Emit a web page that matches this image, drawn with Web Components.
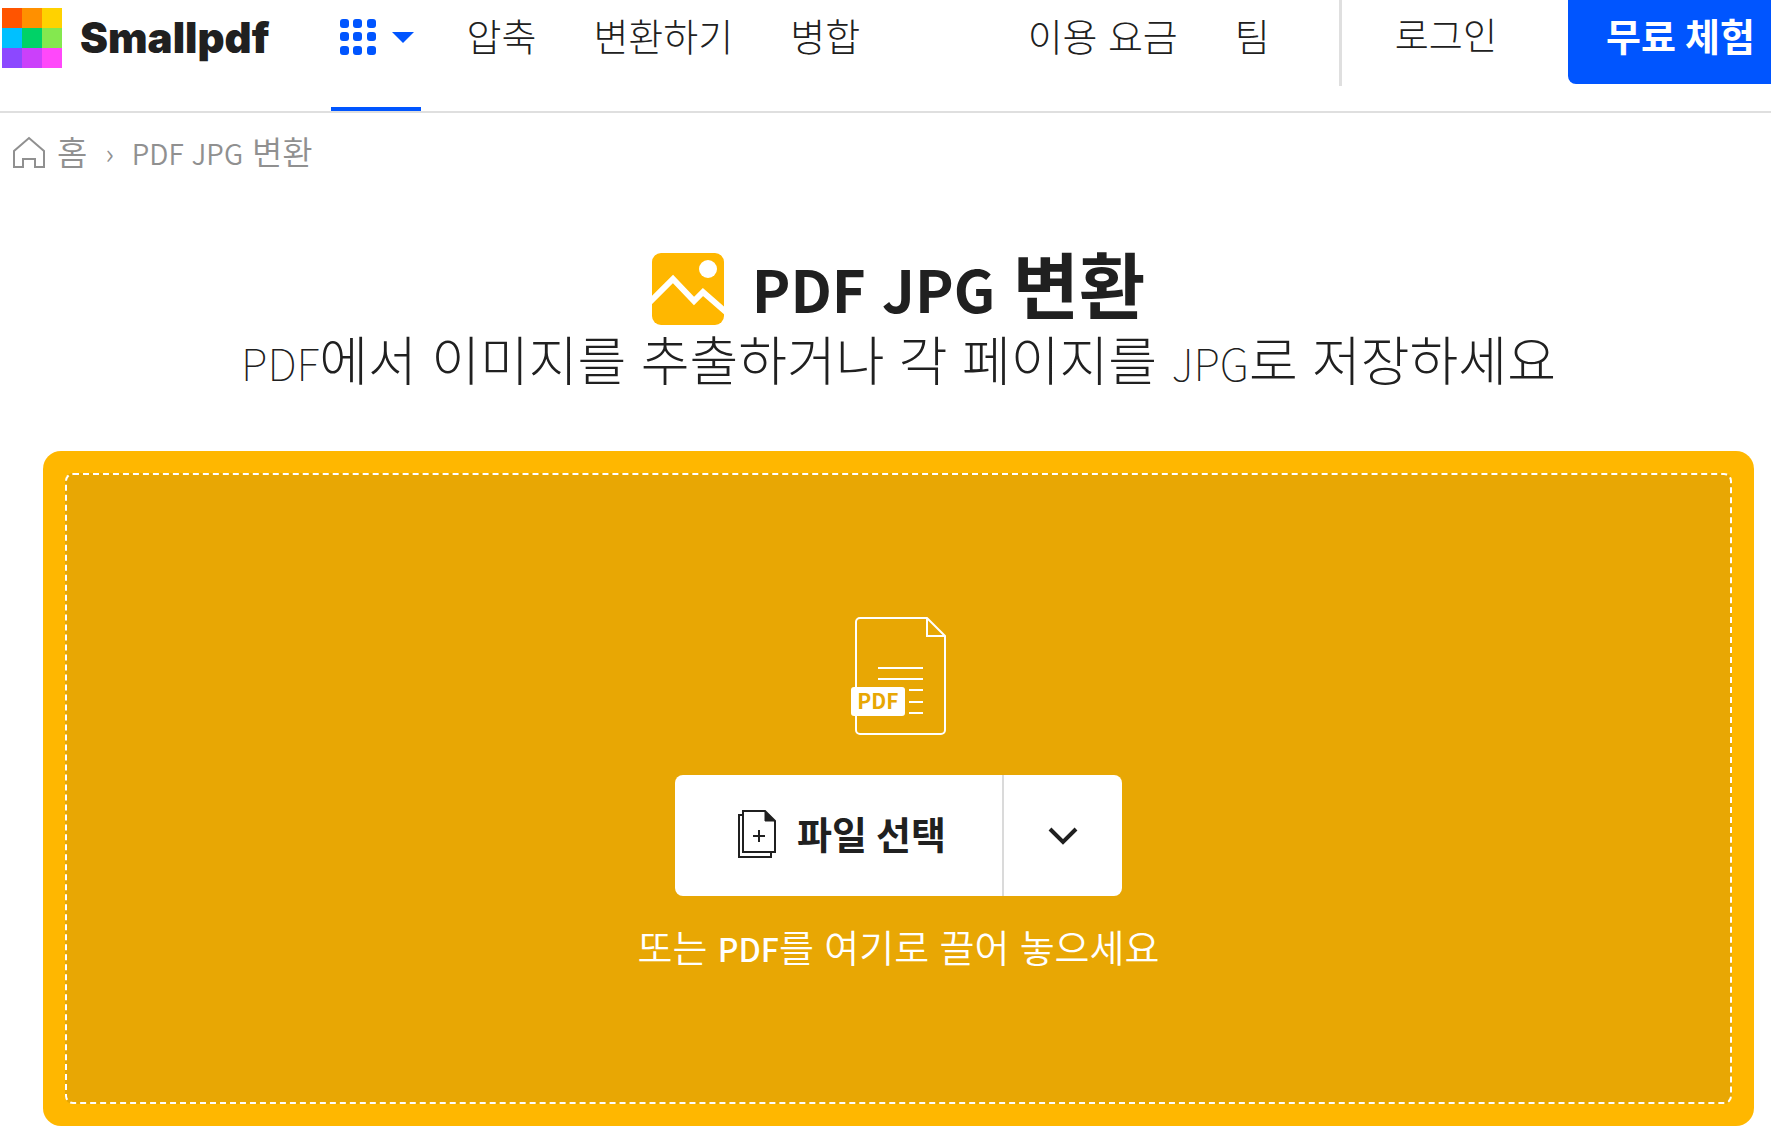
<!DOCTYPE html>
<html lang="ko">
<head>
<meta charset="utf-8">
<meta name="viewport" content="width=device-width, initial-scale=1">
<title>PDF JPG 변환</title>
<style>
  body {
    margin: 0;
    background: #fff;
    color: #202020;
    font-family: Lato, "Noto Sans CJK KR", sans-serif;
  }
</style>
</head>
<body>
<converter-page></converter-page>

<script>
class BaseElement extends HTMLElement {
  constructor() {
    super()
    const template = document.createElement('template')
    template.innerHTML = this.render()
    this.attachShadow({mode: 'open'})
    this.shadowRoot.appendChild(template.content.cloneNode(true))
  }
}


// Latin words are set smaller than the Hangul around them
const latinStyle = `
  .latin {
    font-family: "Noto Sans CJK KR", sans-serif;
    line-height: 1;
  }
`


class SiteLogo extends BaseElement {
  render() {
    const colors = [
      '#ff5400', '#ff9000', '#ffd200',
      '#00c0ff', '#00d267', '#84e84f',
      '#8c48ff', '#cb40fa', '#ff48fa',
    ]
    return `
      <style>
        :host { display: block; }
        a {
          display: flex;
          align-items: center;
          gap: 18px;
          color: #202020;
          font: 900 42px/60px Inter, sans-serif;
          text-decoration: none;
        }
        .tiles {
          display: grid;
          grid-template-columns: repeat(3, 20px);
          grid-auto-rows: 20px;
          outline: 1px solid #fff6;
        }
      </style>
      <a href="#">
        <span class="tiles">
          ${colors.map((c) => `<i style="background: ${c}"></i>`).join('')}
        </span>
        Smallpdf
      </a>
    `
  }
}


class NavLink extends BaseElement {
  render() {
    return `
      <style>
        :host {
          display: block;
          font-size: 38px;
          font-weight: 300;
          line-height: 72px;
        }
        a {
          color: inherit;
          text-decoration: none;
          white-space: nowrap;
        }
      </style>
      <a href="#"><slot></slot></a>
    `
  }
}


class ToolsMenu extends BaseElement {
  render() {
    const dots = []
    for (const y of [0, 13, 27]) {
      for (const x of [0, 13, 27]) {
        dots.push(`<rect x="${x}" y="${y}" width="9" height="9" rx="3" />`)
      }
    }
    return `
      <style>
        :host { display: flex; }
        button {
          display: flex;
          align-items: center;
          gap: 16px;
          box-sizing: border-box;
          height: 111px;
          padding: 0 7px 33px 9px;
          border: 0;
          border-bottom: 4px solid #0055ff;
          background: none;
        }
        svg { display: block; fill: #0055ff; }
      </style>
      <button type="button" aria-label="모든 도구">
        <svg width="36" height="36" viewBox="0 0 36 36">${dots.join('')}</svg>
        <svg width="22" height="11" viewBox="0 0 22 11"><path d="M0 0h22L11 11z" /></svg>
      </button>
    `
  }
}


class SiteHeader extends BaseElement {
  render() {
    return `
      <style>
        :host {
          display: flex;
          align-items: flex-start;
          height: 111px;
          border-bottom: 2px solid #dfdfdf;
        }
        site-logo { margin: 8px 62px 0 2px; }
        nav { display: flex; gap: 57px; }
        .tools { flex: 1; gap: 45px; }
        .products { display: flex; gap: 57px; }
        .rule {
          width: 3px;
          height: 86px;
          margin: 0 -4px 0 12px;
          background: #dfdfdf;
        }
        .login { font-size: 37px; }
        .trial {
          height: 84px;
          margin-left: 14px;
          padding: 0 16px 12px 38px;
          border: 0;
          border-radius: 0 0 0 8px;
          background: #0055ff;
          color: #fff;
          font: 700 38px/72px Lato, "Noto Sans CJK KR", sans-serif;
          white-space: nowrap;
        }
      </style>
      <site-logo></site-logo>
      <nav class="tools">
        <tools-menu></tools-menu>
        <div class="products">
          <nav-link>압축</nav-link>
          <nav-link>변환하기</nav-link>
          <nav-link>병합</nav-link>
        </div>
      </nav>
      <nav>
        <nav-link>이용 요금</nav-link>
        <nav-link>팀</nav-link>
        <div class="rule"></div>
        <nav-link class="login">로그인</nav-link>
        <button class="trial" type="button">무료 체험</button>
      </nav>
    `
  }
}


class BreadCrumb extends BaseElement {
  render() {
    return `
      <style>
        ${latinStyle}
        :host {
          display: block;
          padding: 15px 13px 0;
          color: #909090;
          font-size: 33px;
          font-weight: 350;
          line-height: 48px;
        }
        ol {
          display: flex;
          align-items: center;
          gap: 18px;
          margin: 0;
          padding: 0;
          list-style: none;
        }
        a {
          display: flex;
          align-items: center;
          gap: 12px;
          color: inherit;
          text-decoration: none;
        }
        svg { display: block; fill: none; stroke: #909090; stroke-width: 2; }
        .latin { font-size: 28px; }
        .arrow { font-family: "Noto Sans CJK KR", sans-serif; font-size: 28px; }
      </style>
      <nav aria-label="경로">
        <ol>
          <li>
            <a href="#">
              <svg width="32" height="32" viewBox="0 0 32 32">
                <path d="M1 31V15L16 2l15 13v16h-9v-8H10v8z" />
              </svg>
              홈
            </a>
          </li>
          <li class="arrow" aria-hidden="true">›</li>
          <li><span class="latin">PDF JPG</span> 변환</li>
        </ol>
      </nav>
    `
  }
}


class ToolHeading extends BaseElement {
  render() {
    return `
      <style>
        ${latinStyle}
        :host { display: block; text-align: center; }
        h1 {
          display: flex;
          align-items: flex-start;
          justify-content: center;
          gap: 28px;
          margin: 0;
          font-size: 72px;
          font-weight: 700;
          line-height: 64px;
        }
        p {
          margin: 0;
          font-size: 53px;
          font-weight: 300;
          line-height: 72px;
        }
        h1 .latin { font-size: 58px; }
        p .latin { font-size: 44px; font-weight: 100; }
      </style>
      <h1>
        <svg width="72" height="72" viewBox="0 0 72 72" aria-hidden="true">
          <rect width="72" height="72" rx="9" fill="#ffb700" />
          <circle cx="56" cy="16" r="9" fill="#fff" />
          <path d="M-2 49L21 26l21 22 9-9 24 21" fill="none" stroke="#fff" stroke-width="6" />
        </svg>
        <span><span class="latin">PDF JPG</span> 변환</span>
      </h1>
      <p><span class="latin">PDF</span>에서 이미지를 추출하거나 각 페이지를 <span class="latin">JPG</span>로 저장하세요</p>
    `
  }
}


class PdfIcon extends BaseElement {
  render() {
    return `
      <style>
        :host { display: block; }
        svg { display: block; }
        text { font: 700 21px "Noto Sans CJK KR", sans-serif; }
      </style>
      <svg width="96" height="118" viewBox="0 0 96 118" fill="none" stroke="#fff" stroke-width="2">
        <path d="M76 1H9a4 4 0 0 0-4 4v108a4 4 0 0 0 4 4h81a4 4 0 0 0 4-4V19zv18h18" />
        <path d="M27 51h45M27 62h45M58 73h14M58 85h14M58 96h14" />
        <rect x="0" y="70" width="54" height="29" rx="3" fill="#fff" stroke="none" />
        <text x="27" y="92" text-anchor="middle" fill="#e8a704" stroke="none">PDF</text>
      </svg>
    `
  }
}


class FilePicker extends BaseElement {
  render() {
    return `
      <style>
        :host {
          display: flex;
          border-radius: 8px;
          background: #fff;
          color: #202020;
        }
        button {
          display: flex;
          align-items: center;
          height: 121px;
          border: 0;
          background: none;
          color: inherit;
          font: 700 38px/58px Lato, "Noto Sans CJK KR", sans-serif;
        }
        .choose { gap: 21px; padding: 0 56px 4px 63px; }
        .more { padding: 0 44px; border-left: 2px solid #dadada; }
        svg { display: block; fill: none; stroke: #202020; }
      </style>
      <button class="choose" type="button">
        <svg width="38" height="48" viewBox="0 0 38 48" stroke-width="2">
          <path d="M5 1h22l10 10v31H5z" />
          <path d="M5 5H1v42h32v-5M21 20v12M15 26h12" />
          <path d="M27 1v10h10z" fill="#202020" stroke-width="1" />
        </svg>
        <slot></slot>
      </button>
      <button class="more" type="button" aria-label="다른 위치에서 선택">
        <svg width="30" height="18" viewBox="0 0 30 18" stroke-width="4">
          <path d="M2 2l13 13L28 2" />
        </svg>
      </button>
    `
  }
}


class DropZone extends BaseElement {
  render() {
    return `
      <style>
        ${latinStyle}
        :host {
          display: block;
          padding: 22px;
          border-radius: 18px;
          background: #ffb700;
        }
        .area {
          display: flex;
          flex-direction: column;
          align-items: center;
          padding: 142px 0 126px;
          border: 2px dashed #fff;
          border-radius: 8px;
          background: #e8a704;
        }
        file-picker { margin: 40px 0 22px; }
        p {
          margin: 0;
          color: #fff;
          font-size: 38px;
          font-weight: 350;
          line-height: 58px;
        }
        .latin { font-size: 32px; font-weight: 500; }
      </style>
      <div class="area">
        <pdf-icon></pdf-icon>
        <file-picker>파일 선택</file-picker>
        <p>또는 <span class="latin">PDF</span>를 여기로 끌어 놓으세요</p>
      </div>
    `
  }
}


class ConverterPage extends BaseElement {
  render() {
    return `
      <style>
        :host { display: block; }
        main { padding: 77px 17px 20px 43px; }
        drop-zone { margin-top: 54px; }
      </style>
      <site-header></site-header>
      <bread-crumb></bread-crumb>
      <main>
        <tool-heading></tool-heading>
        <drop-zone></drop-zone>
      </main>
    `
  }
}


customElements.define('site-logo', SiteLogo)
customElements.define('nav-link', NavLink)
customElements.define('tools-menu', ToolsMenu)
customElements.define('site-header', SiteHeader)
customElements.define('bread-crumb', BreadCrumb)
customElements.define('tool-heading', ToolHeading)
customElements.define('pdf-icon', PdfIcon)
customElements.define('file-picker', FilePicker)
customElements.define('drop-zone', DropZone)
customElements.define('converter-page', ConverterPage)
</script>
</body>
</html>
